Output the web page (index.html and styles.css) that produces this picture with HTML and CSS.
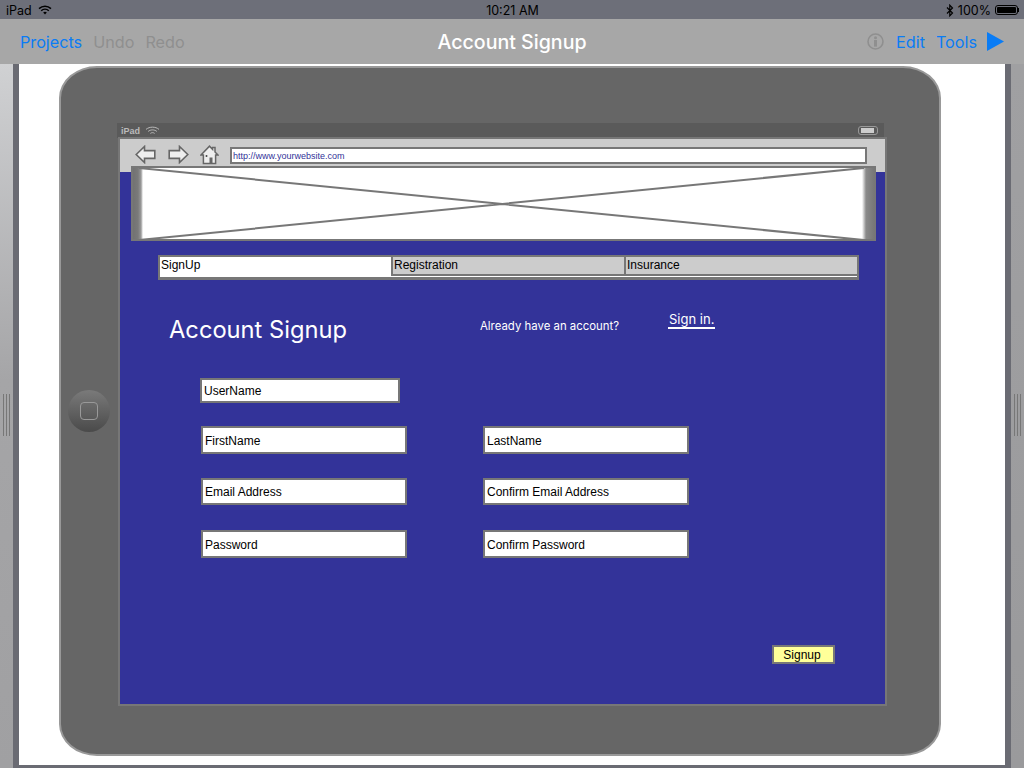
FILE: index.html
```html
<!DOCTYPE html>
<html lang="en">
<head>
    <meta charset="UTF-8">
    <title>Account Signup</title>
    <link rel="stylesheet" href="styles.css">
</head>
<body>

    <!-- iOS status bar -->
    <div class="status-bar">
        <div class="status-left">
            <span>iPad</span>
            <svg class="wifi" width="14" height="10" viewBox="0 0 14 10">
                <path d="M1 3.6C4.4.4 9.6.4 13 3.6" fill="none" stroke="#000" stroke-width="1.5"/>
                <path d="M3.2 5.8C5.4 3.8 8.6 3.8 10.8 5.8" fill="none" stroke="#000" stroke-width="1.5"/>
                <path d="M5.2 7.6 7 9.6 8.8 7.6C7.7 6.6 6.3 6.6 5.2 7.6Z" fill="#000"/>
            </svg>
        </div>
        <div class="status-time">10:21 AM</div>
        <div class="status-right">
            <svg width="8" height="13" viewBox="0 0 8 13">
                <path d="M1 3.5 6.5 9 3.8 11.8V1.2L6.5 4 1 9.5" fill="none" stroke="#000" stroke-width="1.2"/>
            </svg>
            <span>100%</span>
            <div class="battery"><div class="battery-fill"></div></div>
            <div class="battery-nub"></div>
        </div>
    </div>

    <!-- App toolbar -->
    <div class="toolbar">
        <div class="toolbar-left">
            <span class="link">Projects</span>
            <span class="disabled">Undo</span>
            <span class="disabled">Redo</span>
        </div>
        <div class="toolbar-title">Account Signup</div>
        <div class="toolbar-right">
            <svg class="info" width="17" height="17" viewBox="0 0 17 17">
                <circle cx="8.5" cy="8.5" r="7.5" fill="none" stroke="#8f8f8f" stroke-width="1.6"/>
                <circle cx="8.5" cy="4.8" r="1.5" fill="#8f8f8f"/>
                <rect x="7" y="7" width="3" height="6.6" fill="#8f8f8f"/>
            </svg>
            <span class="link">Edit</span>
            <span class="link">Tools</span>
            <svg class="play" width="17" height="19" viewBox="0 0 17 19">
                <path d="M0 0 17 9.5 0 19Z" fill="#0a7cf5"/>
            </svg>
        </div>
    </div>

    <!-- Workspace with the mockup -->
    <div class="workspace">
        <div class="gutter"><div class="grip"></div></div>
        <div class="sheet">
            <div class="device">
                <div class="home-button"><div class="home-square"></div></div>

                <div class="wire-status">
                    <span>iPad</span>
                    <svg width="15" height="9" viewBox="0 0 15 9">
                        <path d="M1 3.4C4.6.4 10.4.4 14 3.4M3.2 5.4C5.6 3.4 9.4 3.4 11.8 5.4M5.4 7.4C6.6 6.4 8.4 6.4 9.6 7.4" fill="none" stroke="#bbb" stroke-width="1"/>
                    </svg>
                    <div class="wire-battery"><div class="wire-battery-fill"></div></div>
                </div>

                <div class="browser-bar">
                    <svg width="21" height="19" viewBox="0 0 21 19">
                        <path d="M1.2 9.5 9.5 1.5V5.6H19.8V13.4H9.5V17.5Z" fill="#eee" stroke="#666" stroke-width="1.6"/>
                    </svg>
                    <svg class="forward" width="21" height="19" viewBox="0 0 21 19">
                        <path d="M19.8 9.5 11.5 1.5V5.6H1.2V13.4H11.5V17.5Z" fill="#eee" stroke="#666" stroke-width="1.6"/>
                    </svg>
                    <svg class="home" width="19" height="20" viewBox="0 0 19 20">
                        <path d="M1 10 9.5 1.2 12.6 4.4V2.4H15V6.9L18 10H15.6V18.6H3.4V10Z" fill="#eee" stroke="#666" stroke-width="1.5"/>
                        <rect x="9.5" y="12.5" width="3" height="6" fill="#666"/>
                        <circle cx="6.5" cy="11" r="1" fill="#444"/>
                    </svg>
                    <div class="url-box">http://www.yourwebsite.com</div>
                </div>

                <div class="wire-page"></div>

                <div class="banner">
                    <svg class="banner-lines" width="725" height="72" viewBox="0 0 725 72" preserveAspectRatio="none">
                        <path d="M0 0 725 72M725 0 0 72" stroke="#777" stroke-width="2"/>
                    </svg>
                </div>

                <div class="tabs">
                    <div class="tab tab-active">SignUp</div>
                    <div class="tab">Registration</div>
                    <div class="tab">Insurance</div>
                </div>

                <div class="form-title">Account Signup</div>
                <div class="have-account">Already have an account?</div>
                <div class="sign-in">Sign in.</div>

                <div class="field field-user">UserName</div>
                <div class="field field-a row-1">FirstName</div>
                <div class="field field-b row-1">LastName</div>
                <div class="field field-a row-2">Email Address</div>
                <div class="field field-b row-2">Confirm Email Address</div>
                <div class="field field-a row-3">Password</div>
                <div class="field field-b row-3">Confirm Password</div>

                <div class="signup-btn">Signup</div>
            </div>
        </div>
        <div class="gutter gutter-right"><div class="grip"></div></div>
    </div>

</body>
</html>
```

FILE: styles.css
```css
* {
    box-sizing: border-box;
}

html, body {
    margin: 0;
    height: 768px;
    overflow: hidden;
}

body {
    font-family: "Liberation Sans", Arial, sans-serif;
    background-color: #6a6b73;
}

.status-bar {
    display: grid;
    grid-template-columns: 1fr auto 1fr;
    align-items: center;
    height: 19px;
    padding: 1px 5px 0 6px;
    background-color: #6d6f79;
    color: #000;
    font-family: Inter, sans-serif;
    font-size: 12.5px;
}

.status-left, .status-right {
    display: flex;
    align-items: center;
}

.status-left {
    gap: 6px;
}

.status-right {
    justify-content: flex-end;
    gap: 4px;
}

.battery {
    width: 23px;
    height: 10px;
    padding: 1px;
    border: 1px solid #000;
    border-radius: 3px;
}

.battery-fill {
    height: 100%;
    background-color: #000;
    border-radius: 1px;
}

.battery-nub {
    width: 1px;
    height: 4px;
    margin-left: -4px;
    background-color: #000;
}

.toolbar {
    display: grid;
    grid-template-columns: 1fr auto 1fr;
    align-items: center;
    height: 45px;
    padding: 0 20px;
    background-color: #a7a7a7;
    font-family: Inter, sans-serif;
    font-size: 16.2px;
}

.toolbar-left {
    display: flex;
    gap: 11px;
}

.toolbar-title {
    padding-top: 1px;
    color: #fff;
    font-size: 19.6px;
    font-weight: 500;
}

.toolbar-right {
    display: flex;
    justify-content: flex-end;
    align-items: center;
    gap: 11px;
}

.toolbar-right .info {
    margin-right: 1px;
}

.toolbar-right .play {
    margin-left: -1px;
}

.link {
    color: #0a7cf5;
}

.disabled {
    color: #8f8f8f;
}

.workspace {
    display: flex;
    height: 704px;
}

.gutter {
    display: flex;
    justify-content: center;
    align-items: center;
    width: 13px;
    background: linear-gradient(#d0d1d3, #a5a5a7 45%, #a0a0a2);
}

.gutter-right {
    margin-left: 6px;
    background: linear-gradient(#a0a0a2, #9a9a9c);
}

.grip {
    width: 7px;
    height: 42px;
    margin-top: -2px;
    border-left: 1px solid #777;
    border-right: 1px solid #777;
    background: linear-gradient(90deg, transparent 2px, #777 2px, #777 3px, transparent 3px);
}

.sheet {
    width: 986px;
    height: 701px;
    margin-left: 6px;
    padding: 2px 0 0 40px;
    background-color: #fff;
}

.device {
    position: relative;
    width: 882px;
    height: 690px;
    border: 2px solid #999;
    border-radius: 38px / 32px;
    background-color: #666;
}

.home-button {
    position: absolute;
    left: 7px;
    top: 322px;
    display: flex;
    justify-content: center;
    align-items: center;
    width: 42px;
    height: 42px;
    border-radius: 50%;
    background: linear-gradient(#7a7a7a, #4a4a4a);
}

.home-square {
    width: 18px;
    height: 18px;
    border: 1px solid #999;
    border-radius: 4px;
}

.wire-status {
    position: absolute;
    left: 56px;
    top: 55px;
    display: flex;
    align-items: center;
    gap: 5px;
    width: 767px;
    height: 15px;
    padding: 0 6px 0 4px;
    background-color: #5a5a5a;
    color: #bbb;
    font-size: 9px;
    font-weight: bold;
}

.wire-battery {
    width: 20px;
    height: 9px;
    margin-left: auto;
    padding: 1px 3px 1px 2px;
    border: 1px solid #999;
    border-radius: 3px;
}

.wire-battery-fill {
    height: 100%;
    background-color: #ccc;
}

.browser-bar {
    position: absolute;
    left: 57px;
    top: 69px;
    display: flex;
    align-items: flex-start;
    width: 769px;
    height: 36px;
    padding: 6px 0 0 15px;
    border: 2px solid #777;
    border-bottom: 0;
    background-color: #ccc;
}

.browser-bar .forward {
    margin-left: 12px;
}

.browser-bar .home {
    margin-left: 11px;
}

.url-box {
    width: 637px;
    height: 17px;
    margin: 2px 0 0 11px;
    padding: 0 0 0 1px;
    border: 2px solid #777;
    background-color: #fff;
    color: #333399;
    font-size: 9px;
    line-height: 14px;
}

.wire-page {
    position: absolute;
    left: 57px;
    top: 104px;
    width: 769px;
    height: 534px;
    border: 2px solid #777;
    border-top: 0;
    background-color: #333399;
}

.banner {
    position: absolute;
    left: 70px;
    top: 98px;
    width: 745px;
    height: 75px;
    border: 2px solid #777;
    background: linear-gradient(90deg, #727272, #7a7a7a 5px, #999 8px, #fff 10px, #fff calc(100% - 12px), #8a8a8a calc(100% - 8px), #777);
}

.banner-lines {
    position: absolute;
    left: 6px;
    top: 0;
}

.tabs {
    position: absolute;
    left: 97px;
    top: 187px;
    display: flex;
    width: 701px;
    height: 25px;
    border: 2px solid #777;
    border-bottom-width: 3px;
    background-color: #fff;
    color: #000;
    font-size: 12px;
}

.tab {
    width: 233px;
    height: 19px;
    padding-left: 1px;
    line-height: 17px;
    background-color: #ccc;
    border-left: 2px solid #777;
    border-bottom: 2px solid #777;
}

.tab-active {
    width: 231px;
    height: 20px;
    background-color: #fff;
    border: 0;
}

.form-title {
    position: absolute;
    left: 108px;
    top: 247px;
    color: #fff;
    font-family: Inter, sans-serif;
    font-size: 23.7px;
    line-height: 30px;
}

.have-account {
    position: absolute;
    left: 419px;
    top: 251px;
    color: #fff;
    font-family: Inter, sans-serif;
    font-size: 11.4px;
}

.sign-in {
    position: absolute;
    left: 607px;
    top: 243px;
    width: 47px;
    padding-top: 1px;
    padding-left: 1px;
    color: #fff;
    font-family: Inter, sans-serif;
    font-size: 13px;
    line-height: 15px;
    white-space: nowrap;
    border-bottom: 2px solid #fff;
}

.field {
    position: absolute;
    height: 28px;
    padding-left: 2px;
    border: 2px solid #777;
    background-color: #fff;
    color: #000;
    font-size: 12px;
    line-height: 26px;
}

.field-user {
    left: 139px;
    top: 310px;
    width: 200px;
    height: 25px;
    line-height: 23px;
}

.field-a {
    left: 140px;
    width: 206px;
}

.field-b {
    left: 422px;
    width: 206px;
}

.row-1 {
    top: 358px;
}

.row-2 {
    top: 410px;
    height: 27px;
    line-height: 25px;
}

.row-3 {
    top: 462px;
}

.signup-btn {
    position: absolute;
    left: 711px;
    top: 577px;
    width: 63px;
    height: 19px;
    border: 2px solid #777;
    background-color: #ffff99;
    color: #000;
    font-size: 12px;
    line-height: 17px;
    text-align: center;
    padding-right: 3px;
}
```
